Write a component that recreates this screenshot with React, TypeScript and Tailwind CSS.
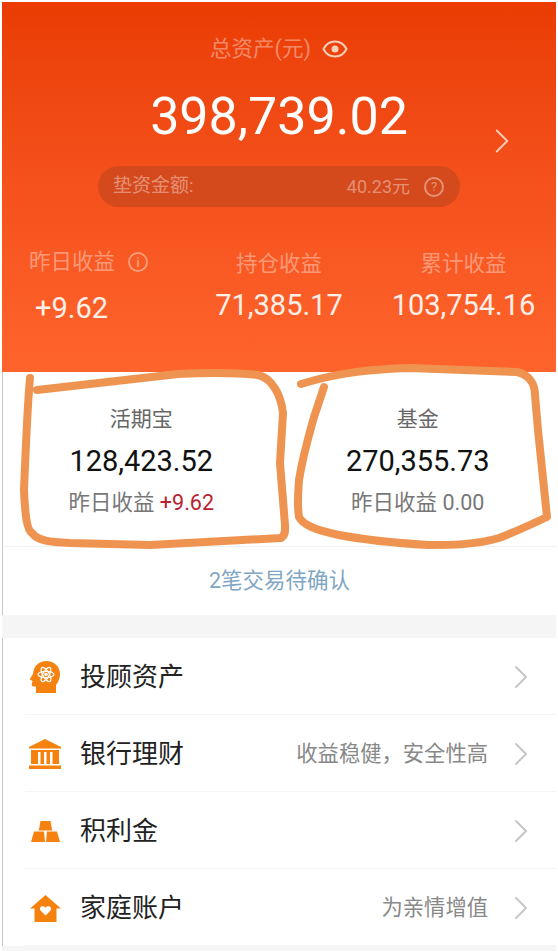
import { ChevronRight } from "lucide-react";

const rows = [
  { label: "投顾资产", hint: "", icon: HeadIcon },
  { label: "银行理财", hint: "收益稳健，安全性高", icon: BankIcon },
  { label: "积利金", hint: "", icon: GoldIcon },
  { label: "家庭账户", hint: "为亲情增值", icon: HomeIcon },
];

function HeadIcon() {
  return (
    <svg viewBox="0 0 30 32" className="h-8 w-[30px]">
      <path
        fill="#f5820f"
        d="M6 32V25.500H3.500C2 25.500 1.500 24.500 1.800 23.300L2.500 20 0.300 18.800C-0.200 18.400 0 17.800 0.300 17.300L3 13C3.500 5 9 0 16.500 0 24 0 30 5.500 30 13 30 18 27.500 22 26 24V32Z"
      />
      <g fill="none" stroke="#fff" strokeWidth="1.300">
        <ellipse cx="16" cy="13.500" rx="8" ry="3.200" />
        <ellipse cx="16" cy="13.500" rx="8" ry="3.200" transform="rotate(60 16 13.500)" />
        <ellipse cx="16" cy="13.500" rx="8" ry="3.200" transform="rotate(120 16 13.500)" />
      </g>
      <circle cx="16" cy="13.500" r="1.800" fill="#fff" />
    </svg>
  );
}

function BankIcon() {
  return (
    <svg viewBox="0 0 32 30" className="h-[30px] w-8" fill="#f5820f">
      <path d="M16 0 32 8V9.500H0V8Z" />
      <path d="M2 11H30V25H2ZM9 13V25H11.500V13ZM15 13V25H17.500V13ZM21 13V25H23.500V13Z" fillRule="evenodd" />
      <path d="M0 26.500H32V30H0Z" />
    </svg>
  );
}

function GoldIcon() {
  return (
    <svg viewBox="0 0 29 21" className="h-[21px] w-[29px]" fill="#f5820f">
      <path d="M9.500 0H19.500L21.200 9.500H7.800Z" />
      <path d="M3 10.500H13L14 21H0Z" />
      <path d="M16 10.500H26L29 21H15Z" />
    </svg>
  );
}

function HomeIcon() {
  return (
    <svg viewBox="0 0 31 27" className="h-[27px] w-[31px]">
      <path fill="#f5820f" d="M15.500 0 31 13.500H26.500V27H4.500V13.500H0Z" />
      <path fill="#fff" d="M15.500 20.500 10.500 15.500C8.500 12.500 12.500 9.500 15.500 12.500 18.500 9.500 22.500 12.500 20.500 15.500Z" />
    </svg>
  );
}

function Eye() {
  return (
    <svg viewBox="0 0 26 18" className="h-[18px] w-[26px]" fill="none" stroke="#fbd0b8" strokeWidth="2">
      <path d="M1.500 9C4 4 8 1.500 13 1.500S22 4 24.500 9C22 14 18 16.500 13 16.500S4 14 1.500 9Z" />
      <circle cx="13" cy="9" r="3.500" fill="#fbd0b8" stroke="none" />
    </svg>
  );
}

function Stat({ label, value }: { label: string; value: string }) {
  return (
    <div className="flex flex-col items-center">
      <div className="flex h-8 items-center text-[21.500px] text-white/40">{label}</div>
      <div className="mt-[7px] text-[29px] leading-9 text-white/90">{value}</div>
    </div>
  );
}

function Account({ title, amount, children }: { title: string; amount: string; children: React.ReactNode }) {
  return (
    <div className="flex flex-col items-center">
      <div className="text-[21px] leading-7 text-[#666]">{title}</div>
      <div className="mt-[10px] text-[29px] leading-9 text-[#111]">{amount}</div>
      <div className="mt-[10px] text-[21.500px] leading-7 text-[#777]">{children}</div>
    </div>
  );
}

export default function App() {
  return (
    <div
      className="relative h-[951px] w-[558px] overflow-hidden bg-white pt-[2px] pr-[2px] pl-[2px]"
      style={{ fontFamily: 'Roboto, "Noto Sans CJK SC", sans-serif' }}
    >
      <div className="flex h-[370px] flex-col bg-gradient-to-b from-[#ea3c03] to-[#ff642c]">
        <div className="mt-[33px] flex items-center justify-center gap-[11px] text-[21.500px] leading-7 text-white/40">
          总资产(元)
          <Eye />
        </div>
        <div className="relative mt-[24px] text-center text-[52px] leading-[60px] text-white">
          398,739.02
          <ChevronRight className="absolute top-[33px] right-[33px] h-[42px] w-[42px] stroke-[1.100] text-white/70" />
        </div>
        <div className="mx-[96px] mt-[19px] flex h-[41px] items-center rounded-full bg-[#d44a1c] pr-4 pl-[15px] text-[19px] text-white/40">
          <span className="flex-1">垫资金额:</span>
          <span className="text-[18px]">40.23元</span>
          <span className="ml-[14px] flex h-5 w-5 items-center justify-center rounded-full border-2 border-white/40 text-[13px] leading-none">
            ?
          </span>
        </div>
        <div className="mt-[41px] grid grid-cols-[185px_184px_185px]">
          <div className="flex -translate-y-[2px] flex-col items-start pl-[27px]">
            <div className="flex h-8 items-center gap-[13px] text-[21.500px] text-white/40">
              昨日收益
              <span className="flex h-5 w-5 items-center justify-center rounded-full border-2 border-white/40 text-[13px] leading-none font-bold">
                i
              </span>
            </div>
            <div className="mt-[12px] ml-[6px] text-[29px] leading-9 text-white/90">+9.62</div>
          </div>
          <Stat label="持仓收益" value="71,385.17" />
          <Stat label="累计收益" value="103,754.16" />
        </div>
      </div>

      <div className="grid h-[175px] grid-cols-2 items-center border-b border-l border-[#f2f2f2] border-l-[#c8c8c8] pt-[4px]">
        <Account title="活期宝" amount="128,423.52">
          昨日收益 <span className="text-[#b8232f]">+9.62</span>
        </Account>
        <Account title="基金" amount="270,355.73">
          昨日收益 0.00
        </Account>
      </div>

      <div className="flex h-[68px] items-center justify-center border-l border-[#c8c8c8] pt-[1px] text-[21.500px] text-[#7fa6c4]">
        2笔交易待确认
      </div>
      <div className="h-[23px] bg-[#f5f5f5]" />

      <div className="border-l border-[#c8c8c8]">
        {rows.map(({ label, hint, icon: Icon }) => (
          <div key={label} className="ml-[22px] flex h-[77px] items-center border-b border-[#f4f4f4] pt-[2px] pr-[15px]">
            <div className="flex w-[55px] items-center justify-center pr-[15px]">
              <Icon />
            </div>
            <div className="flex-1 text-[26px] text-[#222]">{label}</div>
            {hint && <div className="mr-[13px] text-[21.300px] text-[#888]">{hint}</div>}
            <ChevronRight className="h-10 w-10 stroke-[1.100] text-[#c4c4c4]" />
          </div>
        ))}
      </div>
      <div className="h-[6px] bg-[#f5f5f5]" />

      {/* marker drawn on top of the screenshot */}
      <svg viewBox="0 0 558 951" className="pointer-events-none absolute top-0 left-0 h-[951px] w-[558px]" fill="none" stroke="#ef9450" strokeWidth="8" strokeLinecap="round" strokeLinejoin="round">
        <path d="M30 378C28 400 26 440 24 490 25 515 27 530 32 533 38 541 50 542 70 543L150 545 281 538C286 535 285 530 285 525L280 463 283 413C281 395 272 378 258 375 230 372 200 373 178 374L37 390" />
        <path d="M301 384C340 372 375 369 410 368L517 372C530 375 535 385 535 395L538 430 547 517C530 525 515 532 499 538 475 545 450 545 428 545 395 543 365 540 339 535 315 530 303 525 299 517 297 505 298 495 299 480 303 455 309 435 314 417L324 387" />
      </svg>
    </div>
  );
}
